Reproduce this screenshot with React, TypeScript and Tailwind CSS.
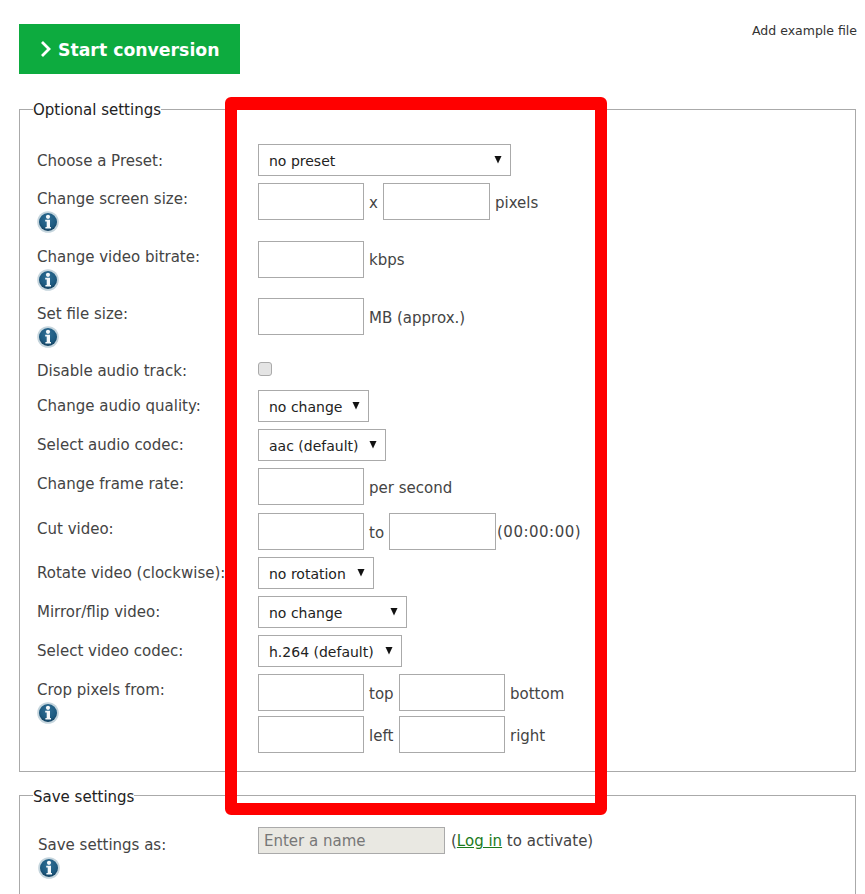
import React from "react";

function InfoIcon() {
  return (
    <svg width="22" height="22" viewBox="0 0 22 22" className="block">
      <defs>
        <radialGradient id="infoBall" cx="50%" cy="35%" r="65%">
          <stop offset="0%" stopColor="#2f6f96" />
          <stop offset="70%" stopColor="#1d5a80" />
          <stop offset="100%" stopColor="#123f5e" />
        </radialGradient>
      </defs>
      <circle cx="11" cy="11" r="10.8" fill="#c5d5dd" />
      <circle cx="11" cy="11" r="9" fill="url(#infoBall)" />
      <circle cx="11" cy="5.8" r="2.1" fill="#f4f8fa" />
      <path d="M8.2 8.8h4.8v7.2h1v1.6H8.4V16h1.3v-5.6H8.2z" fill="#f4f8fa" />
    </svg>
  );
}

function Box({ w }: { w: string }) {
  return <input type="text" className={`${w} h-[37px] border border-[#aaaaaa] bg-white shrink-0`} />;
}

function Unit({ className = "", children }: { className?: string; children: React.ReactNode }) {
  return <span className={`${className} pt-[4px] whitespace-nowrap`}>{children}</span>;
}

function Sel({ w, text }: { w: string; text: string }) {
  return (
    <div className={`${w} h-[32px] border border-[#aaaaaa] bg-white flex items-center justify-between pl-[10px] pr-[8px] text-[14px] text-[#222222] shrink-0`}>
      <span className="whitespace-nowrap pt-[2px]">{text}</span>
      <svg width="8" height="9" viewBox="0 0 8 9" className="shrink-0 mb-[2px]">
        <path d="M0.5 1h7L4 8.5z" fill="#111111" />
      </svg>
    </div>
  );
}

function Row({
  mt,
  label,
  info,
  labelPt = "pt-[7px]",
  children,
}: {
  mt: string;
  label: string;
  info?: boolean;
  labelPt?: string;
  children: React.ReactNode;
}) {
  return (
    <div className={`grid grid-cols-[221px_1fr] ${mt}`}>
      <div className={labelPt}>
        <div className="whitespace-nowrap leading-[20px]">{label}</div>
        {info && (
          <div className="mt-[2px] h-0">
            <InfoIcon />
          </div>
        )}
      </div>
      <div className="flex items-center text-[#444444]">{children}</div>
    </div>
  );
}

export default function App() {
  return (
    <div className="relative h-[894px] w-[865px] overflow-hidden bg-white text-[15px] text-[#444444] font-['Verdana','DejaVu_Sans',sans-serif]">
      <div className="flex justify-between pl-[19px] pr-[8px] pt-[24px]">
        <button className="w-[221px] h-[50px] bg-[#0dab3f] text-white flex items-center pl-[21px] gap-[6px] font-bold text-[17.3px]">
          <svg width="12" height="18" viewBox="0 0 12 18">
            <path d="M2 2l7 7-7 7" fill="none" stroke="#ffffff" strokeWidth="2.8" />
          </svg>
          <span className="pt-[3px]">Start conversion</span>
        </button>
        <a className="text-[12.5px] text-[#333333] leading-[14px]">Add example file</a>
      </div>

      <fieldset className="mt-[25px] ml-[19px] w-[837px] h-[673px] border border-[#aaaaaa] pl-[17px]">
        <legend className="ml-[-4px] text-[#222222] leading-[20px] px-0">
          <span className="block translate-y-[1px]">Optional settings</span>
        </legend>
        <div className="pt-[25px]">
          <Row mt="mt-0" label="Choose a Preset:"><Sel w="w-[253px]" text="no preset" /></Row>
          <Row mt="mt-[7px]" label="Change screen size:" labelPt="pt-[6px]" info>
            <Box w="w-[106px]" />
            <Unit className="mx-[5px] w-[9px]">x</Unit>
            <Box w="w-[107px]" />
            <Unit className="ml-[5px]">pixels</Unit>
          </Row>
          <Row mt="mt-[21px]" label="Change video bitrate:" labelPt="pt-[6px]" info>
            <Box w="w-[106px]" />
            <span className="ml-[5px] pt-[2px] whitespace-nowrap">kbps</span>
          </Row>
          <Row mt="mt-[20px]" label="Set file size:" labelPt="pt-[6px]" info>
            <Box w="w-[106px]" />
            <Unit className="ml-[5px]">MB (approx.)</Unit>
          </Row>
          <Row mt="mt-[27px]" label="Disable audio track:" labelPt="-mt-[1px]">
            <input type="checkbox" className="w-[14px] h-[14px] appearance-none rounded-[3px] border border-[#aaaaaa] bg-[#e4e4e4] mb-[6px]" />
            <span className="h-[20px]" />
          </Row>
          <Row mt="mt-[8px]" label="Change audio quality:" labelPt="pt-[6px]"><Sel w="w-[111px]" text="no change" /></Row>
          <Row mt="mt-[7px]" label="Select audio codec:" labelPt="pt-[6px]"><Sel w="w-[128px]" text="aac (default)" /></Row>
          <Row mt="mt-[7px]" label="Change frame rate:" labelPt="pt-[6px]">
            <Box w="w-[106px]" />
            <Unit className="ml-[5px]">per second</Unit>
          </Row>
          <Row mt="mt-[8px]" label="Cut video:" labelPt="pt-[6px]">
            <Box w="w-[106px]" />
            <Unit className="ml-[5px] w-[20px]">to</Unit>
            <Box w="w-[107px]" />
            <span className="ml-[1px] tracking-[0.5px] whitespace-nowrap pt-[2px]">(00:00:00)</span>
          </Row>
          <Row mt="mt-[7px]" label="Rotate video (clockwise):" labelPt="pt-[6px]"><Sel w="w-[116px]" text="no rotation" /></Row>
          <Row mt="mt-[7px]" label="Mirror/flip video:" labelPt="pt-[6px]"><Sel w="w-[149px]" text="no change" /></Row>
          <Row mt="mt-[7px]" label="Select video codec:" labelPt="pt-[6px]"><Sel w="w-[144px]" text="h.264 (default)" /></Row>
          <Row mt="mt-[7px]" label="Crop pixels from:" labelPt="pt-[6px]" info>
            <Box w="w-[106px]" />
            <Unit className="ml-[5px] w-[30px]">top</Unit>
            <Box w="w-[106px]" />
            <Unit className="ml-[5px]">bottom</Unit>
          </Row>
          <Row mt="mt-[5px]" label="">
            <Box w="w-[106px]" />
            <Unit className="ml-[5px] w-[30px]">left</Unit>
            <Box w="w-[106px]" />
            <Unit className="ml-[5px]">right</Unit>
          </Row>
        </div>
      </fieldset>

      <fieldset className="mt-[13px] ml-[19px] w-[837px] h-[200px] border border-[#aaaaaa] pl-[18px]">
        <legend className="ml-[-5px] text-[#222222] leading-[20px]">
          <span className="block translate-y-[2px]">Save settings</span>
        </legend>
        <div className="grid grid-cols-[220px_1fr] pt-[22px]">
          <div className="pt-[8px]">
            <div className="leading-[20px]">Save settings as:</div>
            <div className="mt-[2px]"><InfoIcon /></div>
          </div>
          <div className="flex items-start">
            <input
              disabled
              placeholder="Enter a name"
              className="w-[187px] h-[27px] border border-[#aaaaaa] bg-[#e9e8e2] px-[5px] placeholder:text-[#777777]"
            />
            <span className="ml-[6px] leading-[26px] pt-[1px] whitespace-nowrap">
              (<a className="text-[#1c7a1c] underline">Log in</a> to activate)
            </span>
          </div>
        </div>
      </fieldset>

      <div className="absolute left-[225px] top-[97px] w-[382px] h-[718px] rounded-[6px] border-x-[12px] border-t-[13px] border-b-[12px] border-[#ff0000] pointer-events-none" />
    </div>
  );
}
